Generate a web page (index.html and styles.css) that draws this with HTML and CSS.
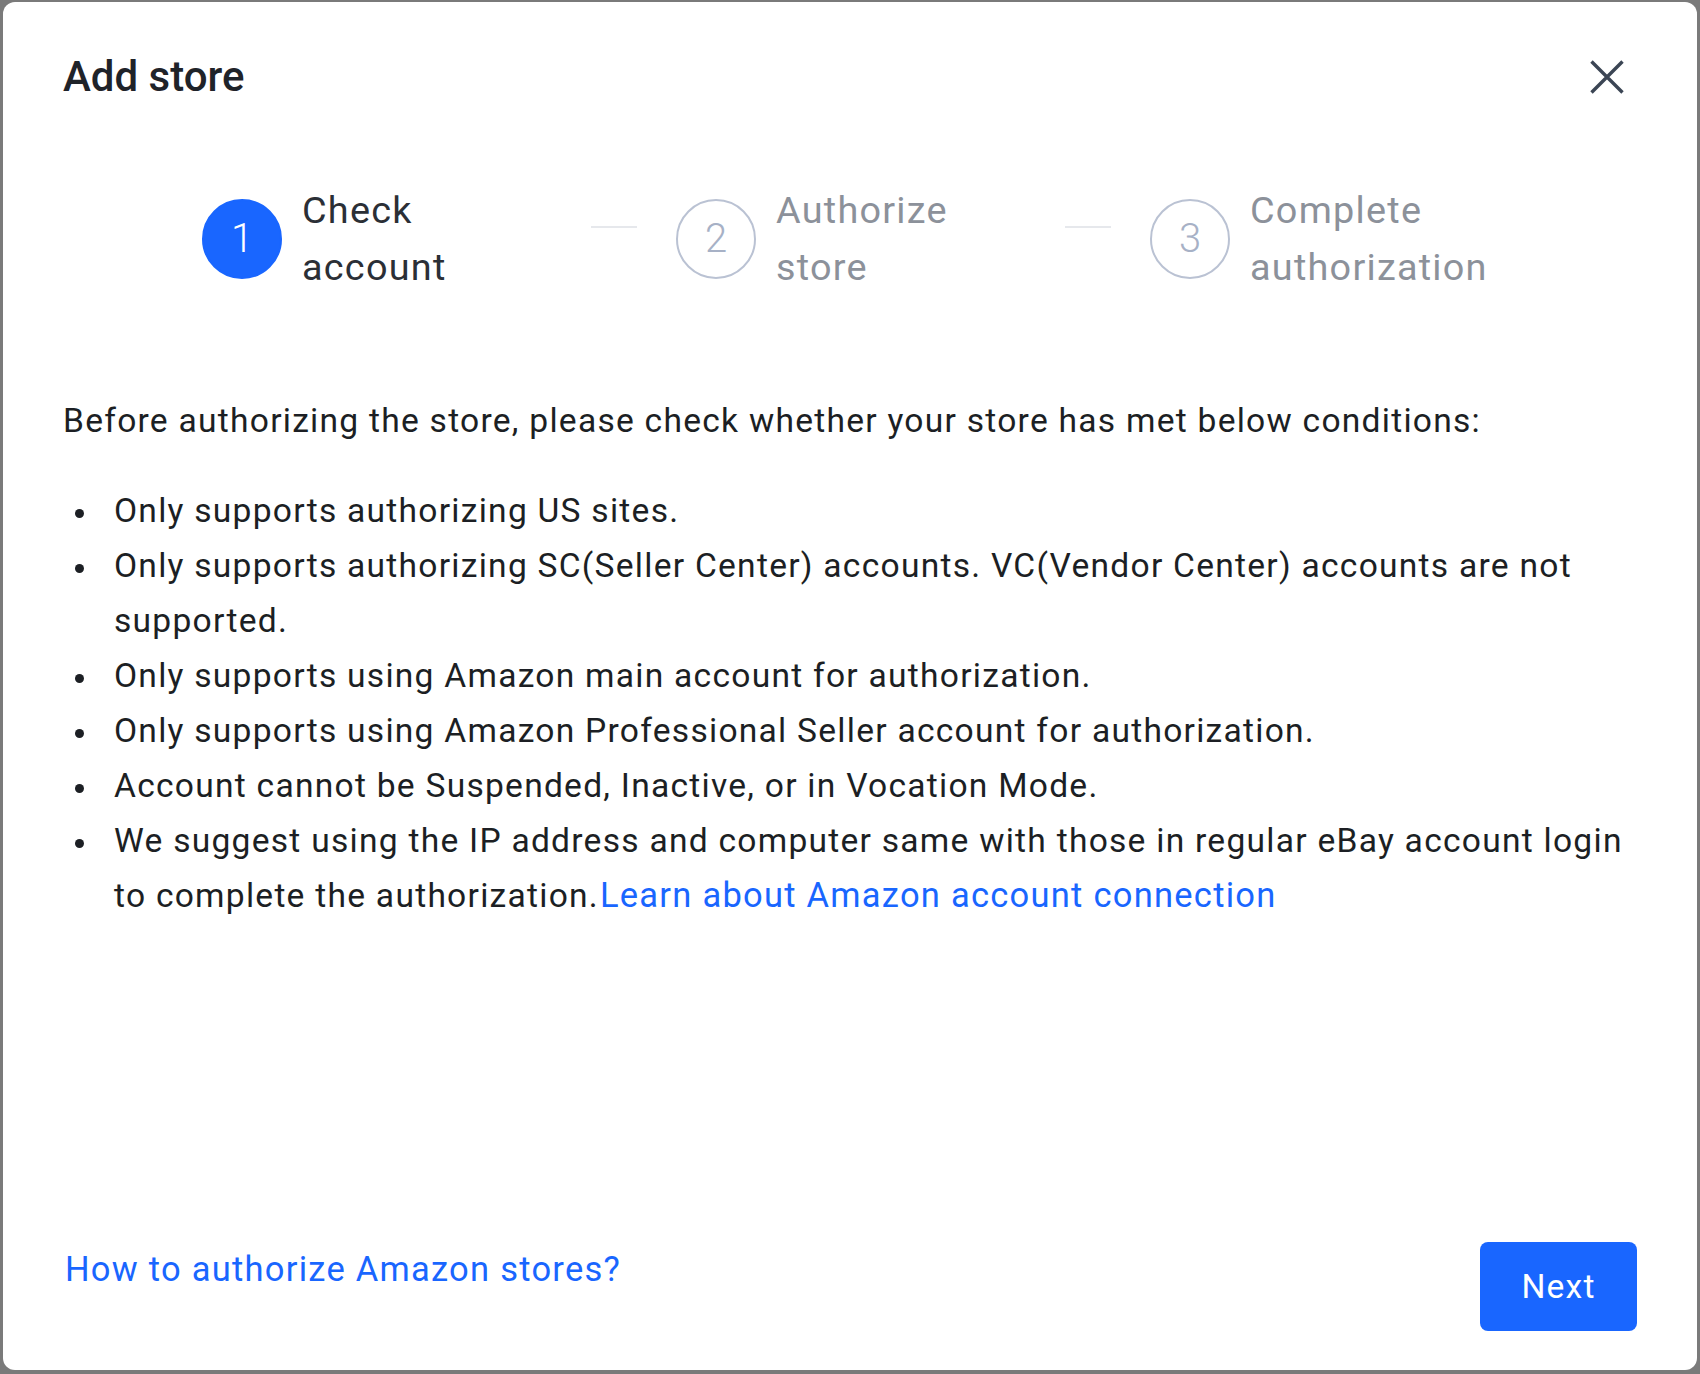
FILE: index.html
```html
<!DOCTYPE html>
<html lang="en">
<head>
<meta charset="utf-8">
<title>Add store</title>
<link rel="stylesheet" href="styles.css">
</head>
<body>
<div class="dialog">
  <header class="dialog-header">
    <h1 class="dialog-title">Add store</h1>
    <button class="close-btn" aria-label="Close">
      <svg width="34" height="34" viewBox="0 0 34 34"><path d="M1.5 1.5L32.5 32.5M32.5 1.5L1.5 32.5" stroke="#3b4554" stroke-width="3.4" fill="none"/></svg>
    </button>
  </header>

  <div class="steps">
    <div class="step step-active">
      <div class="step-icon">1</div>
      <div class="step-title">Check account</div>
      <div class="step-tail"></div>
    </div>
    <div class="step">
      <div class="step-icon">2</div>
      <div class="step-title">Authorize store</div>
      <div class="step-tail"></div>
    </div>
    <div class="step step-last">
      <div class="step-icon">3</div>
      <div class="step-title">Complete authorization</div>
    </div>
  </div>

  <div class="dialog-body">
    <p class="intro">Before authorizing the store, please check whether your store has met below conditions:</p>
    <ul class="conditions">
      <li>Only supports authorizing US sites.</li>
      <li>Only supports authorizing SC(Seller Center) accounts. VC(Vendor Center) accounts are not supported.</li>
      <li>Only supports using Amazon main account for authorization.</li>
      <li>Only supports using Amazon Professional Seller account for authorization.</li>
      <li>Account cannot be Suspended, Inactive, or in Vocation Mode.</li>
      <li>We suggest using the IP address and computer same with those in regular eBay account login to complete the authorization.<a class="inline-link" href="#">Learn about Amazon account connection</a></li>
    </ul>
  </div>

  <footer class="dialog-footer">
    <a class="help-link" href="#">How to authorize Amazon stores?</a>
    <button class="btn-primary">Next</button>
  </footer>
</div>
</body>
</html>
```

FILE: styles.css
```css
* { box-sizing: border-box; }

html, body {
  margin: 0;
  height: 100%;
}

body {
  background: #7a7a7a;
  padding: 2px 3px 4px 3px;
  font-family: Roboto, "Noto Sans", "Liberation Sans", Arial, sans-serif;
  color: #1f2329;
}

.dialog {
  height: 1368px;
  background: #ffffff;
  border-radius: 12px;
  padding: 46px 60px 39px 60px;
  display: flex;
  flex-direction: column;
}

/* header */
.dialog-header {
  display: flex;
  align-items: center;
  justify-content: space-between;
  height: 58px;
}

.dialog-title {
  margin: 0;
  font-size: 42px;
  font-weight: 500;
  line-height: 58px;
  color: #1f2329;
}

.close-btn {
  border: 0;
  background: none;
  padding: 0;
  width: 34px;
  height: 34px;
  margin-right: 13px;
  display: flex;
  cursor: pointer;
}

/* steps */
.steps {
  display: flex;
  margin-top: 76px;
  padding: 0 139px;
}

.step {
  flex: 1 1 0;
  display: flex;
  align-items: center;
}

.step-last {
  flex: none;
}

.step-icon {
  width: 80px;
  height: 80px;
  flex: none;
  border-radius: 50%;
  border: 2px solid #bac2d3;
  color: #a7b1c6;
  font-size: 40px;
  font-weight: 300;
  display: flex;
  align-items: center;
  justify-content: center;
  line-height: 1;
}

.step-active .step-icon {
  background: #1966ff;
  border-color: #1966ff;
  color: #ffffff;
}

.step-title {
  width: 248px;
  flex: none;
  margin-left: 20px;
  font-size: 37.8px;
  letter-spacing: 1.25px;
  line-height: 57px;
  color: #8c919a;
}

.step-active .step-title {
  color: #2b2f36;
}

.step-tail {
  flex: 1 1 auto;
  align-self: flex-start;
  height: 2px;
  margin: 44px 39px 0 41px;
  background: #e6e8ec;
}

/* body */
.dialog-body {
  margin-top: 97px;
  font-size: 33.6px;
  letter-spacing: 1.25px;
  line-height: 55px;
  color: #1c1f24;
}

.intro {
  margin: 0 0 35px 0;
}

.conditions {
  list-style: none;
  margin: 0;
  padding: 0;
}

.conditions li {
  padding-left: 51px;
}

.conditions li::before {
  content: "";
  display: inline-block;
  width: 9px;
  height: 9px;
  border-radius: 50%;
  background: #1c1f24;
  margin-left: -39px;
  margin-right: 30px;
  vertical-align: middle;
}

.inline-link {
  color: #1966ff;
  text-decoration: none;
  font-size: 34.5px;
  margin-left: 1px;
}

/* footer */
.dialog-footer {
  margin-top: auto;
  display: flex;
  align-items: flex-start;
  justify-content: space-between;
}

.help-link {
  font-size: 34.5px;
  letter-spacing: 1.25px;
  line-height: 55px;
  color: #1966ff;
  text-decoration: none;
  margin-left: 2px;
}

.btn-primary {
  width: 157px;
  height: 89px;
  border: 0;
  border-radius: 8px;
  background: #1966ff;
  color: #ffffff;
  font-family: inherit;
  font-size: 33.6px;
  letter-spacing: 1.2px;
  cursor: pointer;
}
```
